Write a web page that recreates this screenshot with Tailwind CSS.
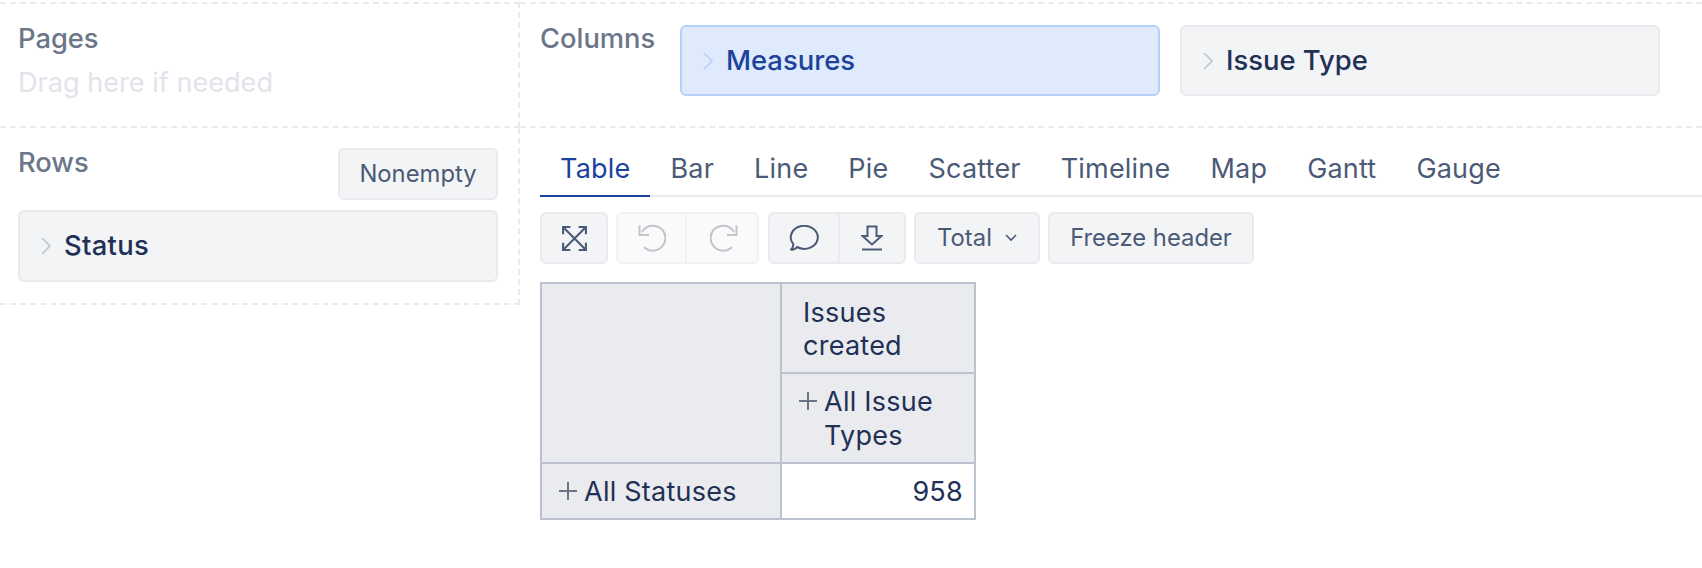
<!DOCTYPE html>
<html lang="en">
<head>
    <meta charset="UTF-8">
    <title>Report</title>
    <script src="https://cdn.jsdelivr.net/npm/@tailwindcss/browser@4"></script>
</head>
<body class="bg-white font-['Inter',sans-serif] h-[568px] overflow-hidden">
    <div class="grid grid-cols-[520px_1fr] pt-[2px]">
        <!-- Pages -->
        <div class="h-[126px] border-t-2 border-r-2 border-b-2 border-dashed border-[#e8eaee] pl-[18px] pt-[18px]">
            <div class="text-[27.3px] leading-[34px] font-medium text-[#6b7689]">Pages</div>
            <div class="text-[27.1px] leading-[34px] mt-[10px] text-[#e1e4ea]">Drag here if needed</div>
        </div>
        <!-- Columns -->
        <div class="h-[126px] border-t-2 border-b-2 border-dashed border-[#e8eaee] pl-[20px] pr-[42px] pt-[21px] flex gap-[20px] items-start">
            <div class="text-[27.3px] leading-[34px] font-medium text-[#6b7689] w-[120px] -mt-[3px]">Columns</div>
            <div class="flex-1 h-[71px] flex items-center gap-[13px] pl-[21px] bg-[#dfeafc] border-2 border-[#b5d1f9] rounded-md">
                <svg class="w-[10px] h-[18px] text-[#b5d1f9]" viewBox="0 0 10 18" fill="none" stroke="currentColor" stroke-width="1.6"><path d="M1 1l8 8-8 8"/></svg>
                <span class="text-[27.4px] font-medium text-[#1c429b]">Measures</span>
            </div>
            <div class="flex-1 h-[71px] flex items-center gap-[13px] pl-[21px] bg-[#f3f4f6] border-2 border-[#e8eaee] rounded-md">
                <svg class="w-[10px] h-[18px] text-[#c0c5cf]" viewBox="0 0 10 18" fill="none" stroke="currentColor" stroke-width="1.6"><path d="M1 1l8 8-8 8"/></svg>
                <span class="text-[27.4px] font-medium text-[#223056]">Issue Type</span>
            </div>
        </div>
        <!-- Rows -->
        <div class="h-[177px] border-r-2 border-b-2 border-dashed border-[#e8eaee] pl-[18px] pr-[20px] pt-[20px]">
            <div class="flex justify-between items-start h-[54px]">
                <div class="text-[27.3px] leading-[34px] font-medium text-[#6b7689] -mt-[2px]">Rows</div>
                <button class="w-[160px] h-[52px] text-[23.8px] text-[#4b5a76] bg-[#f3f4f6] border-2 border-[#e8eaee] rounded-md">Nonempty</button>
            </div>
            <div class="mt-[8px] h-[72px] flex items-center gap-[13px] pl-[21px] bg-[#f3f4f6] border-2 border-[#e8eaee] rounded-md">
                <svg class="w-[10px] h-[18px] text-[#c0c5cf]" viewBox="0 0 10 18" fill="none" stroke="currentColor" stroke-width="1.6"><path d="M1 1l8 8-8 8"/></svg>
                <span class="text-[27.4px] tracking-[0.3px] font-medium text-[#223056]">Status</span>
            </div>
        </div>
        <!-- Report -->
        <div class="pl-[20px] -mt-[1px] row-span-2">
            <div class="flex h-[70px] items-end border-b-2 border-[#e8eaee] text-[27px] tracking-[0.2px] leading-[48px] text-[#4b5a76]">
                <a class="px-[20px] h-[52px] -mb-[2px] border-b-2 border-[#1c429b] text-[#1c429b]">Table</a>
                <a class="px-[20px] h-[52px] -mb-[2px]">Bar</a>
                <a class="px-[20px] h-[52px] -mb-[2px]">Line</a>
                <a class="px-[20px] h-[52px] -mb-[2px]">Pie</a>
                <a class="px-[20px] h-[52px] -mb-[2px]">Scatter</a>
                <a class="px-[20px] h-[52px] -mb-[2px]">Timeline</a>
                <a class="px-[20px] h-[52px] -mb-[2px]">Map</a>
                <a class="px-[20px] h-[52px] -mb-[2px]">Gantt</a>
                <a class="px-[20px] h-[52px] -mb-[2px]">Gauge</a>
            </div>
            <div class="flex gap-[8px] mt-[15px] h-[52px] text-[23.8px] text-[#4b5a76]">
                <button class="w-[68px] flex items-center justify-center bg-[#f3f4f6] border-2 border-[#e8eaee] rounded-md">
                    <svg class="w-[27px] h-[27px]" viewBox="0 0 26 26" fill="none" stroke="currentColor" stroke-width="2"><path d="M2 9V2h7M17 2h7v7M2 17v7h7M24 17v7h-7M2 2l22 22M24 2L2 24"/></svg>
                </button>
                <div class="w-[143px] flex bg-[#fafafb] border-2 border-[#f1f2f4] rounded-md text-[#c0c5cf]">
                    <div class="flex-1 flex items-center justify-center border-r-2 border-[#f1f2f4]">
                        <svg class="w-[28px] h-[28px]" viewBox="0 0 28 28" fill="none" stroke="currentColor" stroke-width="2"><path d="M1.5 1.5V11H11M4 8A12.5 12.5 0 1 1 6 23"/></svg>
                    </div>
                    <div class="flex-1 flex items-center justify-center pl-[3px]">
                        <svg class="w-[28px] h-[28px]" viewBox="0 0 28 28" fill="none" stroke="currentColor" stroke-width="2"><path d="M26.5 1.5V11H17M24 8A12.5 12.5 0 1 0 22 23"/></svg>
                    </div>
                </div>
                <div class="w-[138px] ml-[1px] flex bg-[#f3f4f6] border-2 border-[#e8eaee] rounded-md">
                    <div class="w-[70px] flex items-center justify-center border-r-2 border-[#e8eaee]">
                        <svg class="w-[30px] h-[26px]" viewBox="0 0 30 26" fill="none" stroke="currentColor" stroke-width="2"><path d="M8 22A13.5 11.5 0 1 0 4.3 19C4.3 21 3.5 23.5 2 24.5 4 25 7 24 8 22z" stroke-linejoin="round"/></svg>
                    </div>
                    <div class="flex-1 flex items-center justify-center">
                        <svg class="w-[22px] h-[26px]" viewBox="0 0 22 26" fill="none" stroke="currentColor" stroke-width="2"><path d="M6.5 1.5h9V11h5L11 19.5 1.5 11h5zM1 24.5h20"/></svg>
                    </div>
                </div>
                <button class="w-[126px] flex items-center justify-center gap-[13px] bg-[#f3f4f6] border-2 border-[#e8eaee] rounded-md">
                    Total
                    <svg class="w-[12px] h-[8px]" viewBox="0 0 12 8" fill="none" stroke="currentColor" stroke-width="1.6"><path d="M1 1l5 5 5-5"/></svg>
                </button>
                <button class="w-[206px] bg-[#f3f4f6] border-2 border-[#e8eaee] rounded-md">Freeze header</button>
            </div>
            <table class="mt-[18px] border-collapse border-2 border-[#bcc2ce] text-[27px] tracking-[0.25px] leading-[33.5px] text-[#223056] bg-[#eaebef]">
                <tr>
                    <td rowspan="2" class="w-[240px] border-2 border-[#bcc2ce]"></td>
                    <td class="w-[194px] h-[90px] border-2 border-[#bcc2ce] pl-[21px] pt-[2px]">Issues<br>created</td>
                </tr>
                <tr>
                    <td class="h-[90px] border-2 border-[#bcc2ce] pl-[42px] pt-[1px] relative">
                        <svg class="absolute left-[17px] top-[18px] w-[18px] h-[18px] text-[#6b7689]" viewBox="0 0 18 18" fill="none" stroke="currentColor" stroke-width="2"><path d="M9 0v18M0 9h18"/></svg>
                        All Issue<br>Types
                    </td>
                </tr>
                <tr>
                    <td class="h-[56px] border-2 border-[#bcc2ce] pl-[42px] pt-[2px] relative">
                        <svg class="absolute left-[17px] top-[18px] w-[18px] h-[18px] text-[#6b7689]" viewBox="0 0 18 18" fill="none" stroke="currentColor" stroke-width="2"><path d="M9 0v18M0 9h18"/></svg>
                        All Statuses
                    </td>
                    <td class="h-[56px] border-2 border-[#bcc2ce] bg-white text-right pr-[11px] pt-[1px]">958</td>
                </tr>
            </table>
        </div>
    </div>
</body>
</html>
